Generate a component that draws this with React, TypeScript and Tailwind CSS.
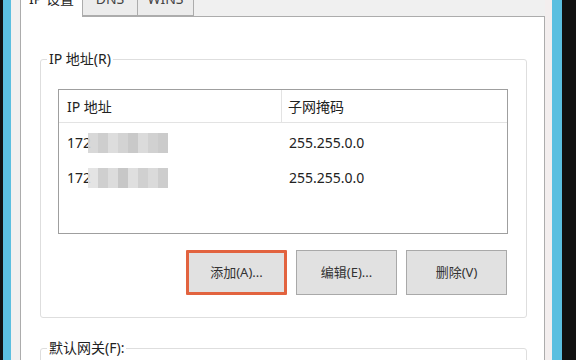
import React from "react";

const font = { fontFamily: '"Noto Sans", "Noto Sans CJK SC", sans-serif' };

const blurA = ["bg-[#d4d4d4]", "bg-[#c9c9c9]", "bg-[#dadada]", "bg-[#cfcfcf]", "bg-[#c4c4c4]", "bg-[#d8d8d8]", "bg-[#cdcdcd]", "bg-[#c6c6c6]"];
const blurB = ["bg-[#e2e2e2]", "bg-[#cacaca]", "bg-[#d9d9d9]", "bg-[#c2c2c2]", "bg-[#dcdcdc]", "bg-[#cbcbcb]", "bg-[#d6d6d6]", "bg-[#c8c8c8]"];

const Blur = ({ shades }: { shades: string[] }) => (
  <div className="flex h-[20px] w-[80px] -ml-[3px] opacity-90">
    {shades.map((c, i) => (
      <div key={i} className={`flex-1 ${c}`} />
    ))}
  </div>
);

const Btn = ({ label, active }: { label: string; active?: boolean }) => (
  <button
    className={
      active
        ? "w-[101px] h-[45px] bg-[#e1e1e1] border-[3px] border-[#e2633f] text-[13px] text-[#333] rounded-[1px]"
        : "w-[101px] h-[45px] bg-[#e1e1e1] border border-[#a9a9a9] text-[13px] text-[#333]"
    }
  >
    {label}
  </button>
);

export default function App() {
  return (
    <div className="w-[576px] h-[360px] overflow-hidden flex bg-[#f0f0f0] text-[#222]" style={font}>
      <div className="w-[3px] bg-[#111]" />
      <div className="w-[8px] bg-[#5bbfe0]" />
      <div className="flex-1 flex flex-col pl-[9px]">
        {/* tabs */}
        <div className="flex items-end h-[16px] text-[14px]">
          <div className="relative z-10 -mb-px h-[29px] w-[63px] bg-white border border-b-0 border-[#acacac] flex justify-center leading-[20px] self-end">
            IP 设置
          </div>
          <div className="h-[28px] w-[55px] bg-[#ececec] border border-l-0 border-[#acacac] flex justify-center leading-[20px] text-[#444]">
            DNS
          </div>
          <div className="h-[28px] w-[56px] bg-[#ececec] border border-l-0 border-[#acacac] flex justify-center leading-[20px] text-[#444]">
            WINS
          </div>
        </div>
        {/* page */}
        <div className="flex-1 bg-white border border-[#acacac] border-b-0 w-[525px] text-[14px]">
          <fieldset className="mt-[32px] ml-[19px] mr-[17px] border border-[#dedede] rounded-[3px] p-0 pb-[22px]">
            <legend className="ml-[6px] px-[2px] leading-[20px]">IP 地址(R)</legend>
            <div className="mt-[20px] ml-[17px] mr-[18px] h-[145px] border border-[#9f9f9f]">
              <div className="flex h-[33px] border-b border-[#e3e3e3] items-center">
                <div className="w-[223px] h-full border-r border-[#e3e3e3] flex items-center pl-[8px]">IP 地址</div>
                <div className="pl-[6px]">子网掩码</div>
              </div>
              <div className="pt-[2px]">
                <div className="flex h-[35px] items-center">
                  <div className="w-[223px] flex items-center pl-[8px]">
                    172<Blur shades={blurA} />
                  </div>
                  <div className="pl-[7px]">255.255.0.0</div>
                </div>
                <div className="flex h-[35px] items-center">
                  <div className="w-[223px] flex items-center pl-[8px]">
                    172<Blur shades={blurB} />
                  </div>
                  <div className="pl-[7px]">255.255.0.0</div>
                </div>
              </div>
            </div>
            <div className="flex justify-end gap-[9px] mt-[16px] mr-[19px]">
              <Btn label="添加(A)..." active />
              <Btn label="编辑(E)..." />
              <Btn label="删除(V)" />
            </div>
          </fieldset>
          <fieldset className="mt-[20px] ml-[19px] mr-[17px] border border-[#dedede] rounded-[3px] p-0 h-[60px]">
            <legend className="ml-[6px] px-[2px] leading-[20px]">默认网关(F):</legend>
          </fieldset>
        </div>
      </div>
      <div className="w-[7px] bg-[#f3eeee]" />
      <div className="w-[10px] bg-[#5bbfe0]" />
      <div className="w-[14px] bg-[#111]" />
    </div>
  );
}
